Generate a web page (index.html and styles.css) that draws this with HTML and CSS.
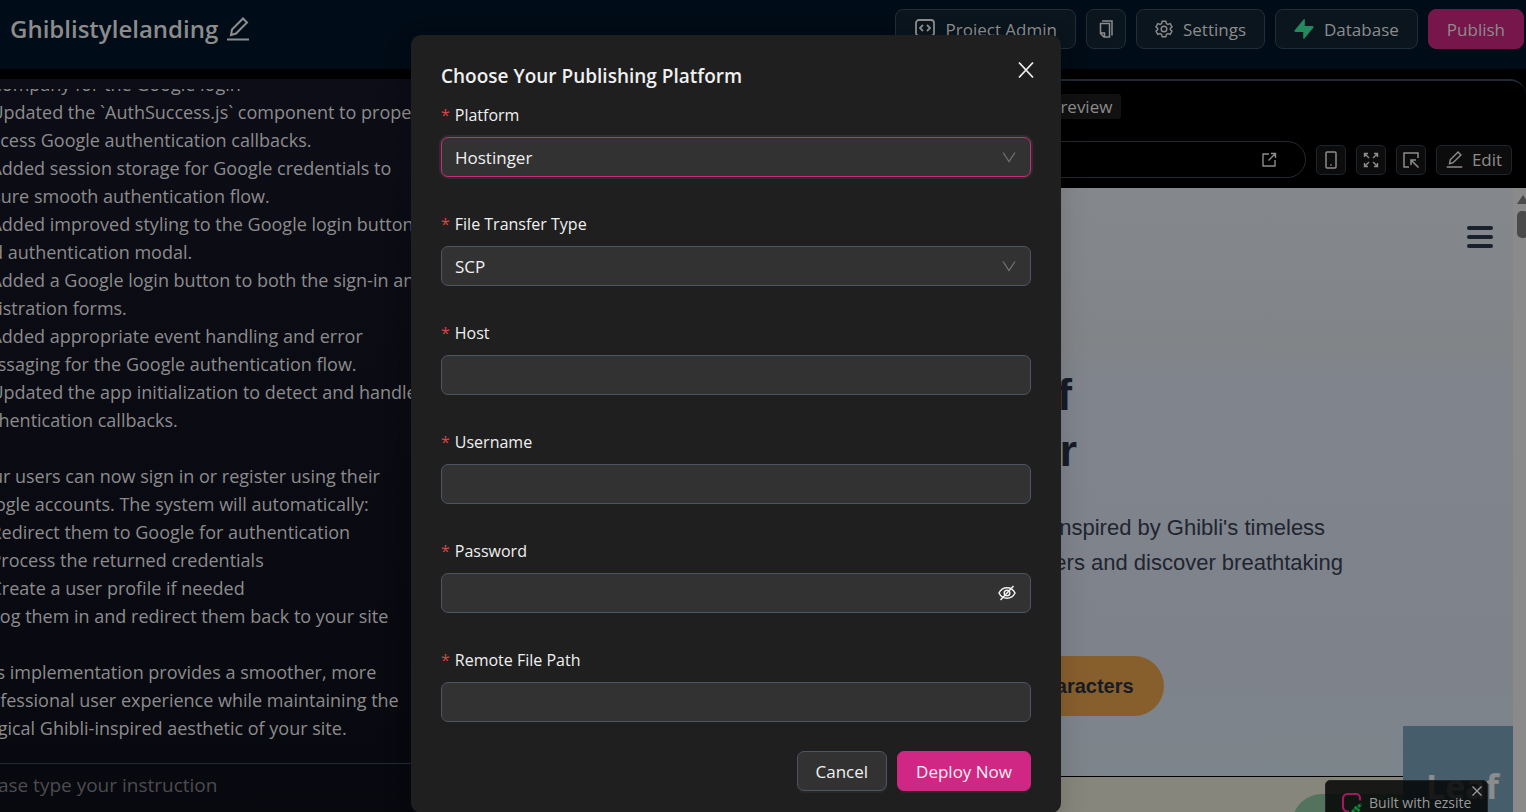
FILE: index.html
```html
<!DOCTYPE html>
<html lang="en">
<head>
    <meta charset="UTF-8">
    <meta name="viewport" content="width=device-width, initial-scale=1.0">
    <title>Ghiblistylelanding</title>
    <link rel="stylesheet" href="styles.css">
</head>
<body>
    <div class="app">
        <header class="topbar">
            <div class="project">
                <h1 class="project-name">Ghiblistylelanding</h1>
                <button class="icon-button" aria-label="Rename project">
                    <svg width="24" height="24" viewBox="0 0 24 24" fill="none" stroke="currentColor" stroke-width="2"><path d="M1 22.500h22M5 18l1-5.500L17 1.500l4 4L10 16.500z"/></svg>
                </button>
            </div>
            <nav class="actions">
                <button class="btn">
                    <svg width="22" height="22" viewBox="0 0 22 22" fill="none" stroke="currentColor" stroke-width="1.800"><rect x="2" y="2" width="18" height="16" rx="3"/><path d="M9 7l-3 3 3 3M13 7l3 3-3 3"/></svg>
                    <span>Project Admin</span>
                </button>
                <button class="btn btn-square" aria-label="Copy">
                    <svg width="18" height="20" viewBox="0 0 18 20" fill="none" stroke="currentColor" stroke-width="1.500"><path d="M5 2h10v14.500M3.500 4.500h9v13.500H7l-3.500-3.500zM3.500 14h4v4"/></svg>
                </button>
                <button class="btn">
                    <svg width="18" height="18" viewBox="0 0 18 18" fill="none" stroke="currentColor" stroke-width="1.400"><path d="M7.200 1.200h3.600l.6 2.300 1.500.9 2.300-.7 1.800 3.100-1.700 1.600v1.200l1.700 1.600-1.800 3.100-2.300-.7-1.500.9-.6 2.300H7.200l-.6-2.300-1.500-.9-2.300.7L1 11.200l1.700-1.600V8.400L1 6.800l1.800-3.100 2.300.7 1.500-.9z"/><circle cx="9" cy="9" r="2.800"/></svg>
                    <span>Settings</span>
                </button>
                <button class="btn">
                    <svg width="20" height="20" viewBox="0 0 20 20"><path fill="#248a5d" d="M10.800 0.300V7h7.700c1 0 1.400 1 .8 1.700L10 20l-.8-.4V13H1.500c-1 0-1.400-1-.8-1.700L10 0z"/></svg>
                    <span>Database</span>
                </button>
                <button class="btn btn-publish">Publish</button>
            </nav>
        </header>

        <main class="workspace">
            <section class="chat">
                <div class="chat-log">
                    <div class="chat-text">
                        <p class="point">- Company for the Google login</p>
                        <p class="point">- Updated the `AuthSuccess.js` component to properly<br>process Google authentication callbacks.</p>
                        <p class="point">- Added session storage for Google credentials to<br>ensure smooth authentication flow.</p>
                        <p class="point">- Added improved styling to the Google login button<br>and authentication modal.</p>
                        <p class="point">- Added a Google login button to both the sign-in and<br>registration forms.</p>
                        <p class="point">- Added appropriate event handling and error<br>messaging for the Google authentication flow.</p>
                        <p class="point">- Updated the app initialization to detect and handle<br>authentication callbacks.</p>
                        <br>
                        <p>Your users can now sign in or register using their<br>Google accounts. The system will automatically:</p>
                        <p class="point">- Redirect them to Google for authentication</p>
                        <p class="point">- Process the returned credentials</p>
                        <p class="point">- Create a user profile if needed</p>
                        <p class="point">- Log them in and redirect them back to your site</p>
                        <br>
                        <p>This implementation provides a smoother, more<br>professional user experience while maintaining the<br>magical Ghibli-inspired aesthetic of your site.</p>
                    </div>
                </div>
                <div class="composer">
                    <textarea class="composer-input" aria-label="Instruction" placeholder="Please type your instruction"></textarea>
                </div>
            </section>

            <section class="preview">
                <div class="tabs"><button class="tab">Preview</button></div>
                <div class="toolbar">
                    <div class="address">
                        <svg width="16" height="16" viewBox="0 0 16 16" fill="none" stroke="currentColor" stroke-width="1.400"><path d="M8 2H2v12h12V8M10 1.500h4.500V6M14 2L7.500 8.500"/></svg>
                    </div>
                    <button class="tool" aria-label="Mobile view">
                        <svg width="18" height="18" viewBox="0 0 18 18" fill="none" stroke="currentColor" stroke-width="1.500"><rect x="4" y="1" width="10" height="16" rx="1"/><path d="M8.300 14h1.400"/></svg>
                    </button>
                    <button class="tool" aria-label="Full screen">
                        <svg width="16" height="16" viewBox="0 0 16 16" fill="none" stroke="currentColor" stroke-width="1.400"><path d="M1.500 5V1.500H5M1.500 1.500L6 6M11 1.500h3.500V5M14.500 1.500L10 6M1.500 11v3.500H5M1.500 14.500L6 10M11 14.500h3.500V11M14.500 14.500L10 10"/></svg>
                    </button>
                    <button class="tool" aria-label="Select element">
                        <svg width="18" height="18" viewBox="0 0 18 18" fill="none" stroke="currentColor" stroke-width="1.500"><path d="M16 7V2H2v14h5M9 9l7.500 7.500M9 14V9h5"/></svg>
                    </button>
                    <button class="tool tool-wide">
                        <svg width="17" height="17" viewBox="0 0 24 24" fill="none" stroke="currentColor" stroke-width="2"><path d="M1 22.500h22M5 18l1-5.500L17 1.500l4 4L10 16.500z"/></svg>
                        <span>Edit</span>
                    </button>
                </div>

                <div class="frame">
                    <div class="site">
                        <div class="hero">
                            <button class="menu" aria-label="Open menu"><i></i><i></i><i></i></button>
                            <h2 class="hero-title">Enter a World of<br>&amp; Ghibli Wonder</h2>
                            <p class="hero-text">Step into the magical landscapes inspired by Ghibli's timeless<br>movies. Meet the beloved characters and discover breathtaking</p>
                            <div class="hero-links">
                                <a class="hero-link" href="#">Explore Art</a>
                                <a class="hero-link" href="#">Meet the Characters</a>
                            </div>
                        </div>
                        <div class="next-section"></div>
                        <div class="green-circle"></div>
                        <div class="leaf-card">Leaf</div>
                        <div class="made-with">
                            <svg width="22" height="22" viewBox="0 0 22 22" fill="none"><path d="M8 19.500H6.500a4.500 4.500 0 0 1-4.500-4.500V6.500A4.500 4.500 0 0 1 6.500 2h8.500a4 4 0 0 1 4 4v2.500" stroke="#a3195f" stroke-width="2.200"/><path d="M11 20l9.500-8M13.500 15l5 4" stroke="#0b8a3b" stroke-width="3" stroke-dasharray="3 1"/></svg>
                            <span>Built with ezsite</span>
                            <button class="made-with-close" aria-label="Hide badge"><svg width="12" height="12" viewBox="0 0 12 12" stroke="currentColor" stroke-width="1.400"><path d="M1.500 1.500l9 9M10.500 1.500l-9 9"/></svg></button>
                        </div>
                    </div>
                    <div class="scrollbar">
                        <span class="scroll-up"></span>
                        <span class="scroll-thumb"></span>
                    </div>
                </div>
            </section>
        </main>
    </div>

    <div class="modal-wrap">
        <form class="modal" role="dialog" aria-labelledby="modal-title">
            <button type="button" class="modal-close" aria-label="Close">
                <svg width="18" height="18" viewBox="0 0 18 18" stroke="currentColor" stroke-width="1.800"><path d="M2 1.500l14 15M16 1.500L2 16.500"/></svg>
            </button>
            <h2 class="modal-title" id="modal-title">Choose Your Publishing Platform</h2>
            <div class="field">
                <label class="label" for="platform">Platform</label>
                <div class="control">
                    <select class="input input-active" id="platform"><option>Hostinger</option></select>
                    <svg class="arrow" width="14" height="12" viewBox="0 0 14 12" fill="none" stroke="currentColor" stroke-width="1.300"><path d="M1 1.500l6 9 6-9"/></svg>
                </div>
            </div>
            <div class="field">
                <label class="label" for="transfer">File Transfer Type</label>
                <div class="control">
                    <select class="input" id="transfer"><option>SCP</option></select>
                    <svg class="arrow" width="14" height="12" viewBox="0 0 14 12" fill="none" stroke="currentColor" stroke-width="1.300"><path d="M1 1.500l6 9 6-9"/></svg>
                </div>
            </div>
            <div class="field">
                <label class="label" for="host">Host</label>
                <input class="input" id="host" type="text">
            </div>
            <div class="field">
                <label class="label" for="username">Username</label>
                <input class="input" id="username" type="text">
            </div>
            <div class="field">
                <label class="label" for="password">Password</label>
                <div class="control">
                    <input class="input" id="password" type="password">
                    <button type="button" class="eye" aria-label="Show password">
                        <svg width="18" height="16" viewBox="0 0 18 16" fill="none" stroke="currentColor" stroke-width="1.500"><path d="M1 8c1.700-3.500 4.300-5.200 8-5.200S15.300 4.500 17 8c-1.700 3.500-4.300 5.200-8 5.200S2.700 11.500 1 8zM15.500 1L2.500 15"/><circle cx="9" cy="8" r="2.800"/></svg>
                    </button>
                </div>
            </div>
            <div class="field">
                <label class="label" for="path">Remote File Path</label>
                <input class="input" id="path" type="text">
            </div>
            <div class="modal-footer">
                <button type="button" class="modal-button">Cancel</button>
                <button type="submit" class="modal-button modal-button-primary">Deploy Now</button>
            </div>
        </form>
    </div>
</body>
</html>
```
FILE: styles.css
```css
* {
    box-sizing: border-box;
}

body {
    margin: 0;
    background: #000;
    color: #8c8c8c;
    font-family: "Open Sans", "Noto Sans", sans-serif;
    font-size: 17px;
    overflow: hidden;
}

p {
    margin: 0;
}

button,
input,
select,
textarea {
    font: inherit;
    color: inherit;
}

button {
    padding: 0;
    border: 0;
    background: none;
    cursor: pointer;
}

svg {
    display: block;
    flex: none;
}

/* app shell */
.app {
    display: flex;
    flex-direction: column;
    height: 100vh;
}

.topbar {
    display: flex;
    justify-content: space-between;
    padding: 9px 2px 20px 10px;
    background: #000c17;
}

.project {
    display: flex;
    align-items: center;
    gap: 8px;
}

.project-name {
    margin: 0;
    font-size: 24px;
    line-height: 40px;
    font-weight: 600;
}

.actions {
    display: flex;
    gap: 10px;
}

.btn {
    display: flex;
    align-items: center;
    justify-content: center;
    gap: 10px;
    height: 40px;
    padding: 0 18px;
    border: 1px solid #242d36;
    border-radius: 8px;
    background: #0b151e;
    white-space: nowrap;
}

.btn-square {
    width: 40px;
    padding: 0;
}

.btn-publish {
    border-color: #76164a;
    background: #76164a;
}

.workspace {
    flex: 1;
    min-height: 0;
    display: grid;
    grid-template-columns: 2fr 3fr;
    grid-template-rows: minmax(0, 1fr);
    gap: 10px;
    padding-top: 10px;
}

/* chat */
.chat {
    display: flex;
    flex-direction: column;
    min-width: 0;
    min-height: 0;
    background: linear-gradient(#0d0d17, #08080f);
    font-size: 18px;
}

.chat-log {
    flex: 1;
    display: flex;
    align-items: flex-end;
    min-height: 0;
    margin-top: 10px;
    padding-bottom: 21px;
    overflow: hidden;
}

.chat-text {
    margin-left: -29px;
    line-height: 28px;
    white-space: nowrap;
}

.point {
    text-indent: 9px;
}

.composer {
    height: 49px;
    border-top: 1px solid #242a35;
    overflow: hidden;
}

.composer-input {
    display: block;
    width: 100%;
    height: 48px;
    margin-left: -29px;
    padding: 7px 0;
    border: 0;
    outline: 0;
    background: none;
    font-size: 19px;
    line-height: 28px;
    resize: none;
}

.composer-input::placeholder {
    color: #4c4c4f;
}

/* preview */
.preview {
    display: flex;
    flex-direction: column;
    min-width: 0;
    border-top: 2px solid #1f2a36;
    border-radius: 0 16px 0 0;
}

.tabs {
    padding: 13px 0 22px 410px;
}

.tab {
    display: block;
    width: 95px;
    height: 25px;
    padding-right: 9px;
    border-radius: 3px;
    background: #111;
    line-height: 25px;
    text-align: right;
}

.toolbar {
    display: flex;
    align-items: center;
    gap: 10px;
    padding: 0 14px 10px;
}

.address {
    flex: 1;
    display: flex;
    align-items: center;
    justify-content: flex-end;
    height: 37px;
    padding-right: 28px;
    border: 1px solid #242a30;
    border-radius: 20px;
}

.tool {
    display: flex;
    align-items: center;
    justify-content: center;
    gap: 9px;
    width: 30px;
    height: 30px;
    border: 1px solid #1e242b;
    border-radius: 5px;
    background: #0c0c0c;
}

.tool-wide {
    width: 76px;
}

.frame {
    flex: 1;
    display: flex;
    min-height: 0;
    overflow: hidden;
}

.site {
    position: relative;
    flex: 1;
    color: #161b26;
    font-family: "Liberation Sans", Arial, sans-serif;
    background: linear-gradient(#84878c 0, #828588 160px, #80848c 190px, #7e828b 450px, #7c858b 588px);
}

.hero {
    display: flex;
    flex-direction: column;
    height: 589px;
    padding: 38px 20px 60px 109px;
    border-bottom: 1px solid #000;
    white-space: nowrap;
}

.menu {
    align-self: flex-end;
    display: flex;
    flex-direction: column;
    gap: 5px;
    width: 26px;
}

.menu i {
    height: 4px;
    border-radius: 2px;
    background: #19212d;
}

.hero-title {
    margin: 119px 0 31px;
    font-size: 45px;
    line-height: 56px;
}

.hero-text {
    margin: 0 0 76px;
    color: #20252f;
    font-size: 22px;
    line-height: 35px;
}

.hero-links {
    display: flex;
    gap: 20px;
}

.hero-link {
    padding: 0 30px;
    border-radius: 30px;
    background: #875f2d;
    color: #161b26;
    font-size: 20px;
    font-weight: 700;
    line-height: 60px;
    text-decoration: none;
}

.next-section {
    height: 40px;
    background: #86867c;
}

.green-circle {
    position: absolute;
    right: 81px;
    top: 606px;
    width: 140px;
    height: 60px;
    border-radius: 30px;
    background: #54735f;
}

.leaf-card {
    position: absolute;
    right: 0;
    top: 538px;
    width: 110px;
    height: 120px;
    padding-right: 14px;
    background: #465e6b;
    color: #8c8c8c;
    font-family: "Open Sans", sans-serif;
    font-size: 34px;
    font-weight: 700;
    line-height: 120px;
    text-align: right;
}

.made-with {
    position: absolute;
    right: 25px;
    top: 592px;
    display: flex;
    align-items: center;
    gap: 6px;
    width: 163px;
    height: 45px;
    padding-left: 15px;
    border: 1px solid #222;
    border-radius: 5px;
    background: rgba(0, 0, 0, 0.82);
    color: #9a9a9a;
    font-family: "Open Sans", sans-serif;
    font-size: 14px;
    white-space: nowrap;
}

.made-with-close {
    position: absolute;
    right: 4px;
    top: 4px;
}

.scrollbar {
    width: 13px;
    padding: 7px 0 0 4px;
    background: #8a8a8a;
    overflow: hidden;
}

.scroll-up {
    display: block;
    width: 12px;
    height: 9px;
    background: #4a4a4a;
    clip-path: polygon(50% 0, 100% 100%, 0 100%);
}

.scroll-thumb {
    display: block;
    width: 12px;
    height: 27px;
    margin-top: 7px;
    border-radius: 5px;
    background: #4a4a4a;
}

/* publish dialog */
.modal-wrap {
    position: absolute;
    inset: 0;
    display: flex;
    justify-content: center;
    align-items: flex-start;
    padding: 35px 54px 0 0;
    overflow: hidden;
}

.modal {
    position: relative;
    width: 650px;
    padding: 26px 30px 22px;
    border-radius: 10px;
    background: #1f1f1f;
    color: #f0f0f0;
    box-shadow: 0 6px 16px rgba(0, 0, 0, 0.08), 0 9px 28px 8px rgba(0, 0, 0, 0.05);
}

.modal-close {
    position: absolute;
    right: 26px;
    top: 26px;
}

.modal-title {
    margin: 0 0 9px;
    font-size: 19px;
    line-height: 30px;
    font-weight: 600;
}

.field {
    display: flex;
    flex-direction: column;
    gap: 7px;
    margin-bottom: 32px;
}

.label {
    font-size: 16px;
    line-height: 30px;
}

.label::before {
    content: "*";
    margin-right: 5px;
    color: #dc4446;
}

.control {
    position: relative;
}

.input {
    display: block;
    width: 100%;
    height: 40px;
    padding: 0 13px;
    border: 1px solid #4b5563;
    border-radius: 7px;
    outline: 0;
    background: #323232;
    appearance: none;
}

.input-active {
    border-color: #d12784;
    box-shadow: 0 0 0 2px #2c2c2c;
}

.arrow {
    position: absolute;
    right: 15px;
    top: 14px;
    color: #707070;
    pointer-events: none;
}

.eye {
    position: absolute;
    right: 15px;
    top: 12px;
}

.modal-footer {
    display: flex;
    justify-content: flex-end;
    gap: 10px;
    margin-top: -3px;
}

.modal-button {
    height: 40px;
    padding: 0 18px;
    border: 1px solid #4b5563;
    border-radius: 7px;
    background: #323232;
    box-shadow: 0 2px 0 rgba(255, 255, 255, 0.04);
}

.modal-button-primary {
    border-color: #d12784;
    background: #d12784;
}
```
